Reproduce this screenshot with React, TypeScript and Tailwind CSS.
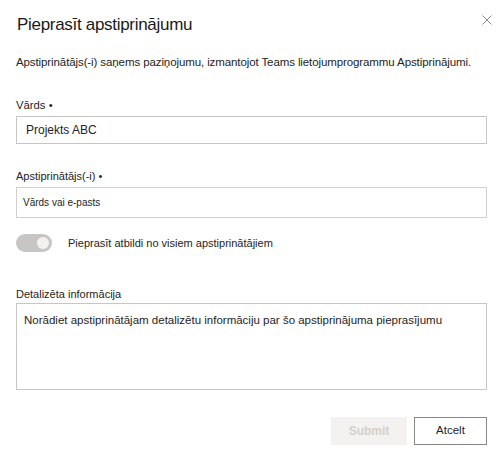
export default function App() {
  return (
    <div className="h-[455px] w-[500px] bg-white font-['Liberation_Sans',Arial,sans-serif] text-[#252423]">
      <div className="flex items-start justify-between pl-[17px] pr-[8px] pt-[13px]">
        <h1 className="text-[17px] font-light leading-[24px] tracking-[-0.3px] text-[#1b1a19]">Pieprasīt apstiprinājumu</h1>
        <button className="mt-[2px] text-[#8a8886]">
          <svg width="10" height="10" viewBox="0 0 10 10" fill="none" stroke="currentColor" strokeWidth="1">
            <path d="M0.5 0.5l9 9M9.5 0.5l-9 9" />
          </svg>
        </button>
      </div>

      <p className="mt-[17px] pl-[16px] text-[11.5px] leading-[16px] tracking-[-0.1px]">
        Apstiprinātājs(-i) saņems paziņojumu, izmantojot Teams lietojumprogrammu Apstiprinājumi.
      </p>

      <div className="mt-[27px] pl-[16px] pr-[13px]">
        <label className="block text-[11.3px] leading-[16px]">Vārds •</label>
        <div className="mt-[3px] flex h-[28px] items-center border border-[#c8c6c4] px-[9px] text-[12px]">
          Projekts ABC
        </div>

        <label className="mt-[24px] block text-[11px] leading-[16px]">Apstiprinātājs(-i) •</label>
        <div className="mt-[3px] flex h-[31px] items-center border border-[#d2d0ce] px-[6px] text-[10px]">
          Vārds vai e-pasts
        </div>

        <div className="mt-[16px] flex items-center gap-[16px]">
          <div className="flex h-[18px] w-[36px] items-center justify-end rounded-full bg-[#c8c6c4] pr-[3px]">
            <div className="h-[12px] w-[12px] rounded-full bg-[#f3f2f1]" />
          </div>
          <span className="text-[11px]">Pieprasīt atbildi no visiem apstiprinātājiem</span>
        </div>

        <label className="mt-[34px] block text-[11px] leading-[16px]">Detalizēta informācija</label>
        <div className="mt-[1px] h-[87px] border border-[#c8c6c4] px-[7px] pt-[8px] text-[11.5px] leading-[16px]">
          Norādiet apstiprinātājam detalizētu informāciju par šo apstiprinājuma pieprasījumu
        </div>

        <div className="mt-[27px] flex justify-end gap-[7px]">
          <button className="h-[28px] w-[76px] bg-[#f3f2f1] text-[12px] font-bold text-[#d2d0ce]">Submit</button>
          <button className="h-[28px] w-[73px] border border-[#8a8886] bg-white text-[11.5px] text-[#252423]">Atcelt</button>
        </div>
      </div>
    </div>
  );
}
